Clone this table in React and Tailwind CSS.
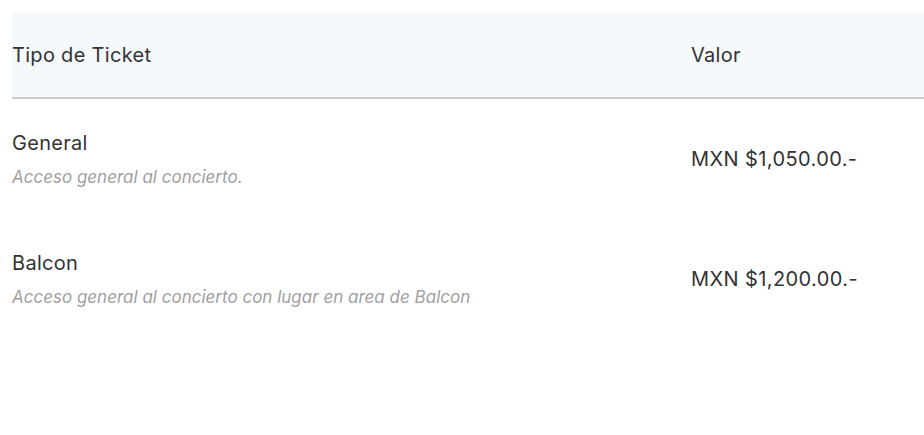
export default function App() {
  const rows = [
    { name: "General", desc: "Acceso general al concierto.", price: "MXN $1,050.00.-" },
    { name: "Balcon", desc: "Acceso general al concierto con lugar en area de Balcon", price: "MXN $1,200.00.-" },
  ];
  return (
    <div className="w-[924px] h-[435px] bg-white pt-3 pl-3 text-[#333333]" style={{ fontFamily: 'Inter, "Liberation Sans", Arial, sans-serif' }}>
      <div className="flex h-[85px] items-center bg-[#f6f9fc] border-b-2 border-[#cccccc] box-content">
        <div className="w-[679px] text-[20px] leading-6 tracking-[0.3px]">Tipo de Ticket</div>
        <div className="text-[20px] leading-6 tracking-[0.3px]">Valor</div>
      </div>
      {rows.map((r) => (
        <div key={r.name} className="flex h-[120px] items-center">
          <div className="w-[679px] flex flex-col gap-[12px]">
            <div className="text-[20px] leading-6 tracking-[0.3px]">{r.name}</div>
            <div className="text-[17px] leading-[21px] italic text-[#a0a0a0]">{r.desc}</div>
          </div>
          <div className="text-[20px] leading-6 tracking-[0.4px]">{r.price}</div>
        </div>
      ))}
    </div>
  );
}
